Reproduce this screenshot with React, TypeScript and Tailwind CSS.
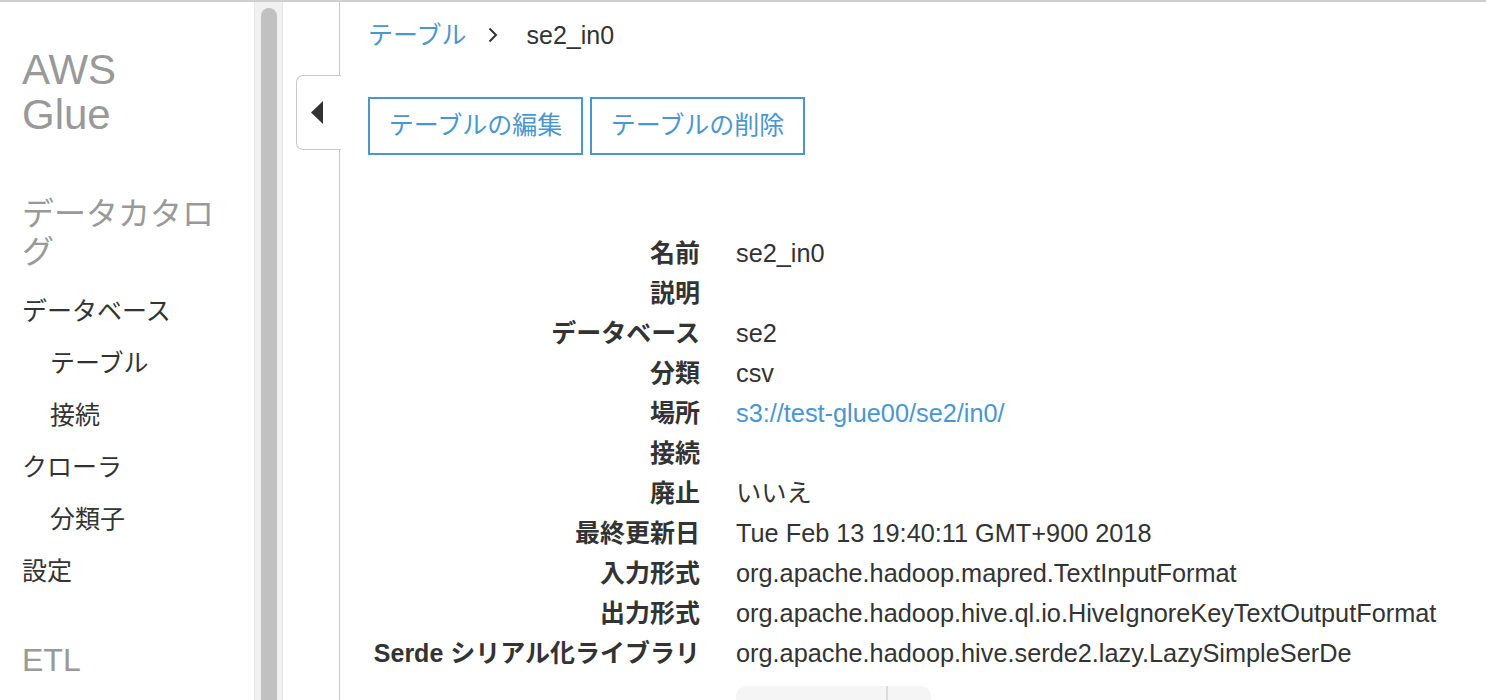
const sideItems = [
  { label: "データベース", indent: false },
  { label: "テーブル", indent: true },
  { label: "接続", indent: true },
  { label: "クローラ", indent: false },
  { label: "分類子", indent: true },
  { label: "設定", indent: false },
];

const details: { label: string; value: string; link?: boolean }[] = [
  { label: "名前", value: "se2_in0" },
  { label: "説明", value: "" },
  { label: "データベース", value: "se2" },
  { label: "分類", value: "csv" },
  { label: "場所", value: "s3://test-glue00/se2/in0/", link: true },
  { label: "接続", value: "" },
  { label: "廃止", value: "いいえ" },
  { label: "最終更新日", value: "Tue Feb 13 19:40:11 GMT+900 2018" },
  { label: "入力形式", value: "org.apache.hadoop.mapred.TextInputFormat" },
  { label: "出力形式", value: "org.apache.hadoop.hive.ql.io.HiveIgnoreKeyTextOutputFormat" },
  { label: "Serde シリアル化ライブラリ", value: "org.apache.hadoop.hive.serde2.lazy.LazySimpleSerDe" },
];

function Sidebar() {
  return (
    <aside className="w-[254px] shrink-0 pl-[22px] pr-[22px] pt-[45px]">
      <div className="text-[42px] leading-[45px] text-[#999]">
        <div>AWS</div>
        <div>Glue</div>
      </div>

      <div className="mt-[58px] text-[32px] leading-[38px] text-[#999]">データカタログ</div>

      <ul className="mt-[14px]">
        {sideItems.map((item) => (
          <li
            key={item.label}
            className={`text-[25px] leading-[52px] text-[#333] ${item.indent ? "pl-[28px]" : ""}`}
          >
            {item.label}
          </li>
        ))}
      </ul>

      <div className="mt-[43px] text-[32px] leading-[40px] text-[#999]">ETL</div>
    </aside>
  );
}

function ScrollTrack() {
  return (
    <div className="w-[29px] shrink-0 border-x border-[#e6e6e6] bg-[#f1f1f1] pt-[6px]">
      <div className="mx-auto h-[720px] w-[16px] rounded-full bg-[#c1c1c1]" />
    </div>
  );
}

export default function App() {
  return (
    <div
      className="flex h-[700px] w-[1486px] overflow-hidden border-t-2 border-[#cfcfcf] bg-white"
      style={{ fontFamily: '"Liberation Sans", "Noto Sans CJK JP", sans-serif' }}
    >
      <Sidebar />
      <ScrollTrack />
      <div className="w-[56px] shrink-0" />

      <main className="relative flex-1 border-l border-[#c8c8c8] pl-[28px] pt-[17px]">
        <button
          type="button"
          className="absolute left-[-44px] top-[73px] flex h-[75px] w-[45px] items-center justify-center rounded-l-[7px] border border-r-0 border-[#c8c8c8] bg-white pr-[4px]"
        >
          <svg width="12" height="23" viewBox="0 0 12 23">
            <path d="M12 0 L0 11.5 L12 23 Z" fill="#333" />
          </svg>
        </button>

        <nav className="flex h-[32px] items-center text-[25px] leading-[32px]">
          <span className="text-[#4a96cf]">テーブル</span>
          <svg className="ml-[21px] mr-[29px]" width="10" height="16" viewBox="0 0 10 16">
            <path d="M1.5 1.5 L8 8 L1.5 14.5" fill="none" stroke="#333" strokeWidth="2" />
          </svg>
          <span className="text-[#333]">se2_in0</span>
        </nav>

        <div className="mt-[46px] flex gap-[7px]">
          <button
            type="button"
            className="h-[58px] w-[215px] border-2 border-[#4a96cf] text-[25px] text-[#4a96cf]"
          >
            テーブルの編集
          </button>
          <button
            type="button"
            className="h-[58px] w-[215px] border-2 border-[#4a96cf] text-[25px] text-[#4a96cf]"
          >
            テーブルの削除
          </button>
        </div>

        <dl className="mt-[78px] grid grid-cols-[332px_1fr] gap-x-[36px] text-[25px] leading-[40px]">
          {details.map((row) => (
            <div key={row.label} className="contents">
              <dt className="whitespace-nowrap text-right font-bold text-[#333]">{row.label}</dt>
              <dd
                className={`whitespace-nowrap text-[25.3px] ${row.link ? "text-[#4a96cf]" : "text-[#333]"}`}
              >
                {row.value || "\u00a0"}
              </dd>
            </div>
          ))}
        </dl>

        <div className="ml-[368px] mt-[13px] flex h-[44px] w-[195px] rounded-[10px] bg-[#f5f5f5]">
          <div className="w-[152px] border-r-2 border-[#dcdcdc]" />
        </div>
      </main>
    </div>
  );
}
